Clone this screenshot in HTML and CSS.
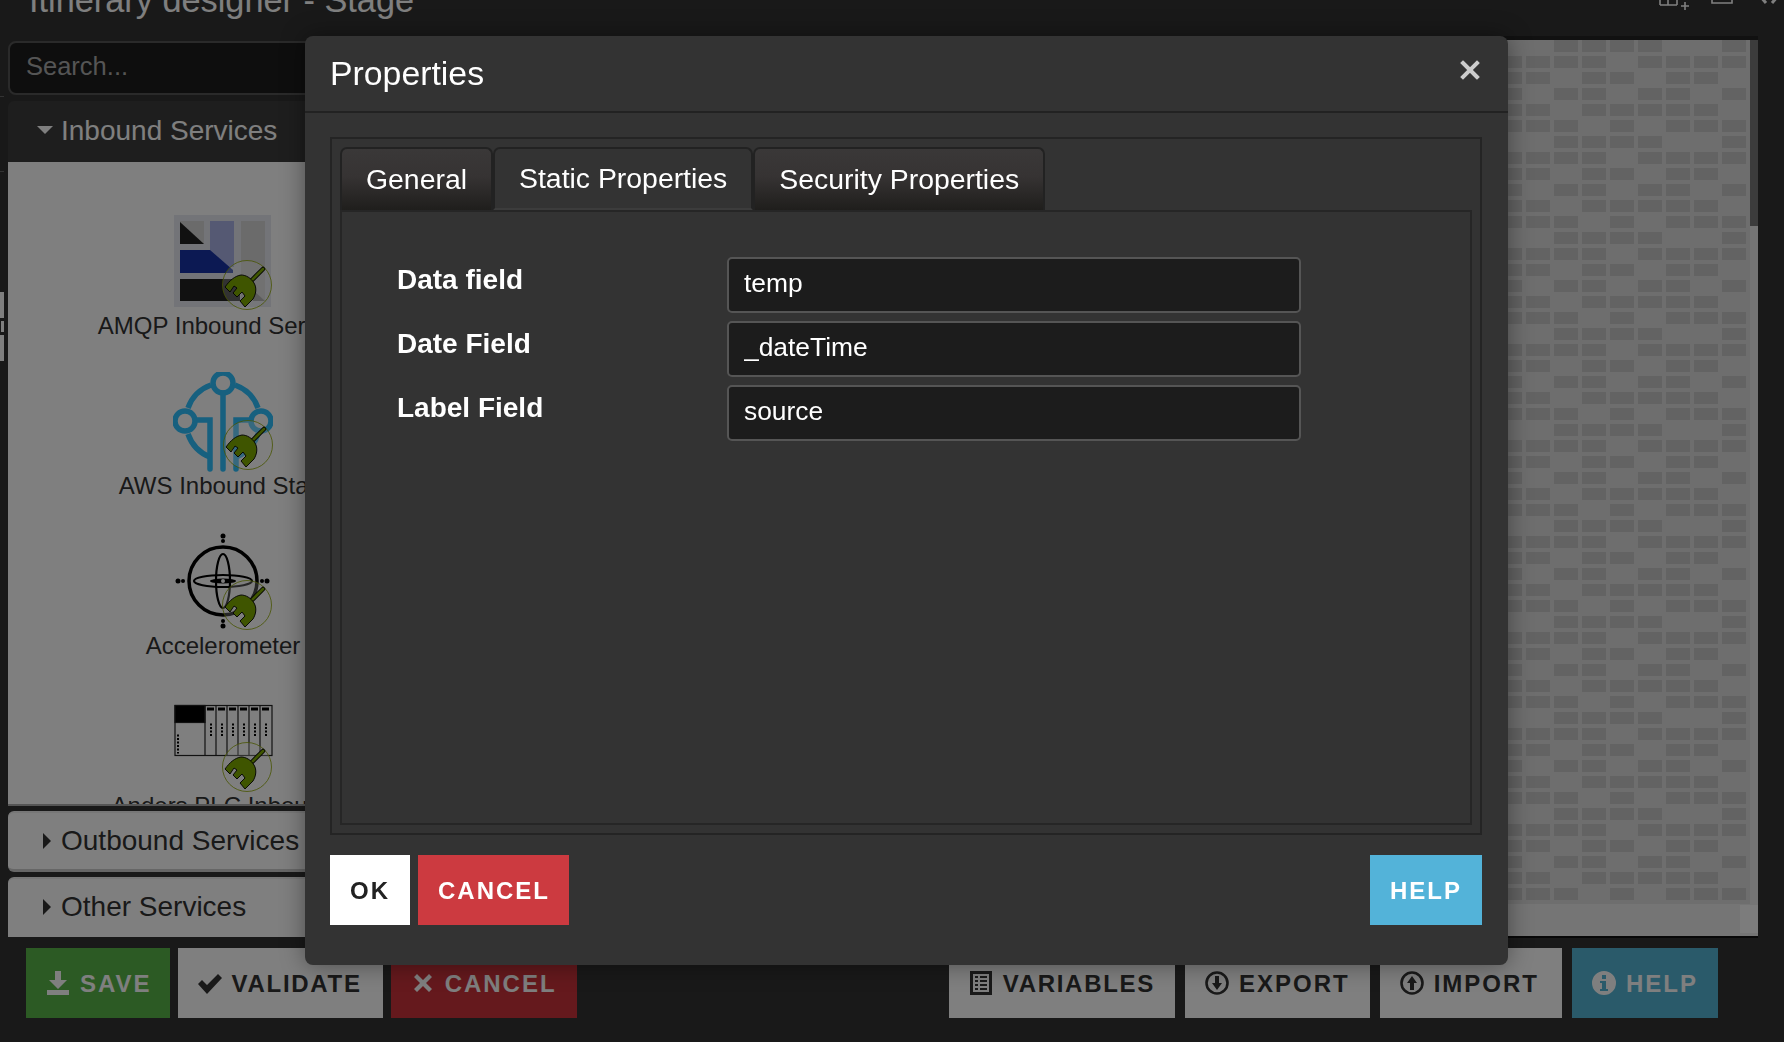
FILE: index.html
```html
<!DOCTYPE html>
<html lang="en">
<head>
    <meta charset="UTF-8">
    <title>Itinerary designer - Stage</title>
    <link rel="stylesheet" href="styles.css">
</head>
<body>

    <svg class="defs" width="0" height="0">
        <defs>
            <symbol id="plug" viewBox="0 0 50 50">
                <circle cx="25" cy="25" r="24.5" fill="rgba(255,255,255,0.3)" stroke="#8fa800" stroke-width="0.8"/>
                <path d="M41 9L29 21" stroke="#000" stroke-width="4.5" stroke-linecap="round"/>
                <path d="M41 9L29 21" stroke="#7eaa00" stroke-width="2.8" stroke-linecap="round"/>
                <path d="M3 27C8 20 13 16 19 15C24 15 29 18 32 23C35 28 34 34 31 39L23 47L18 41L23 36L20 32L15 37L11 33L15 28L12 26L8 32Z" fill="#7eaa00" stroke="#000" stroke-width="0.9" stroke-linejoin="round"/>
            </symbol>
            <pattern id="cells" patternUnits="userSpaceOnUse" x="52" y="0" width="252" height="96">
                <path fill="#c6c6c6" d="M56 0h24v12h-24zM84 0h24v12h-24zM112 0h24v12h-24zM140 0h24v12h-24zM224 0h24v12h-24z
                    M0 16h24v12h-24zM28 16h24v12h-24zM56 16h24v12h-24zM84 16h24v12h-24zM140 16h24v12h-24zM168 16h24v12h-24zM196 16h24v12h-24zM224 16h24v12h-24z
                    M0 32h24v12h-24zM28 32h24v12h-24zM84 32h24v12h-24zM112 32h24v12h-24zM168 32h24v12h-24zM196 32h24v12h-24z
                    M0 48h24v12h-24zM56 48h24v12h-24zM84 48h24v12h-24zM140 48h24v12h-24zM168 48h24v12h-24zM224 48h24v12h-24z
                    M0 64h24v12h-24zM28 64h24v12h-24zM84 64h24v12h-24zM112 64h24v12h-24zM140 64h24v12h-24zM168 64h24v12h-24zM196 64h24v12h-24z
                    M0 80h24v12h-24zM28 80h24v12h-24zM56 80h24v12h-24zM112 80h24v12h-24zM168 80h24v12h-24zM196 80h24v12h-24zM224 80h24v12h-24z"/>
            </pattern>
        </defs>
    </svg>

    <header class="topbar">
        <h1 class="page-title">Itinerary designer - Stage</h1>
        <svg class="window-icons" width="134" height="12" viewBox="0 0 134 12" fill="none" stroke="#fff" stroke-width="1.6">
            <path d="M10 -2V5M18 -2V5M27 -2V5M10 5H27M35 2V10M31 6H39"/>
            <path d="M62 -2V3H82V-2"/>
            <path d="M110 -4L116 3M128 -4L122 3" stroke-width="3"/>
        </svg>
    </header>

    <main class="workspace">
        <div class="edge">
            <i class="edge-line first"></i>
            <i class="edge-line second"></i>
            <i class="edge-block first"></i>
            <i class="edge-block small"></i>
            <i class="edge-block"></i>
        </div>

        <aside class="sidebar">
            <input class="search" type="text" placeholder="Search...">

            <div class="group-head open"><span class="arrow-down"></span>Inbound Services</div>
            <div class="group-body">
                <div class="item">
                    <svg class="item-icon" viewBox="0 0 100 100">
                        <rect x="1" y="3" width="97" height="92" fill="#e6e9f0"/>
                        <rect x="7" y="9" width="24" height="23" fill="#d6d6d6"/>
                        <path d="M7 10L31 32H7Z" fill="#222"/>
                        <rect x="37" y="9" width="24" height="46" fill="#aab2e6"/>
                        <rect x="68" y="9" width="24" height="80" fill="#d6d6d6"/>
                        <path d="M7 38H37L60 58V61H7Z" fill="#1833a6"/>
                        <rect x="7" y="67" width="60" height="22" fill="#222"/>
                        <path d="M80 89L92 89V78Z" fill="#999" transform="matrix(-1 0 0 1 172 0)"/>
                        <use href="#plug" x="49" y="48" width="50" height="50"/>
                    </svg>
                    <div class="item-label">AMQP Inbound Service</div>
                </div>
                <div class="item">
                    <svg class="item-icon" viewBox="0 0 100 100" fill="none" stroke="#2ec0ff" stroke-width="5.5">
                        <circle cx="50" cy="11" r="10"/>
                        <circle cx="12" cy="49" r="10"/>
                        <circle cx="88" cy="49" r="10"/>
                        <path d="M15 36A38 38 0 0 1 38 13M85 36A38 38 0 0 0 62 13M15 62A38 38 0 0 0 37 85M85 62A38 38 0 0 1 63 85"/>
                        <path d="M50 21V97M24 48H37V97M76 48H63V97" stroke-linecap="round"/>
                        <use href="#plug" x="50" y="48" width="50" height="50"/>
                    </svg>
                    <div class="item-label">AWS Inbound Stats</div>
                </div>
                <div class="item">
                    <svg class="item-icon" viewBox="0 0 100 100" fill="none" stroke="#000">
                        <circle cx="50" cy="49" r="34" stroke-width="3.5"/>
                        <ellipse cx="50" cy="49" rx="29" ry="6" stroke-width="2.2"/>
                        <ellipse cx="50" cy="49" rx="7" ry="27" stroke-width="2.2"/>
                        <ellipse cx="50" cy="49" rx="13" ry="2.5" fill="#000" stroke="none"/>
                        <circle cx="50" cy="49" r="2" fill="#fff" stroke="none"/>
                        <g fill="#000" stroke="none">
                            <circle cx="50" cy="4" r="2.5"/>
                            <circle cx="50" cy="9" r="2"/>
                            <circle cx="50" cy="89" r="2"/>
                            <circle cx="50" cy="94" r="2.5"/>
                            <circle cx="5" cy="49" r="2.5"/>
                            <circle cx="10" cy="49" r="2"/>
                            <circle cx="89" cy="49" r="2"/>
                            <circle cx="94" cy="49" r="2.5"/>
                        </g>
                        <use href="#plug" x="49" y="48" width="50" height="50"/>
                    </svg>
                    <div class="item-label">Accelerometer</div>
                </div>
                <div class="item">
                    <svg class="item-icon" viewBox="0 -1.5 100 100" fill="none" stroke="#222" stroke-width="1.2">
                        <rect x="2" y="12" width="97" height="50"/>
                        <rect x="2" y="12" width="30" height="17" fill="#000"/>
                        <path d="M32 12V62M43 12V62M54 12V62M65 12V62M76 12V62M87 12V62"/>
                        <path fill="#000" stroke="none" d="M34 14h7v3h-7zM45 14h7v3h-7zM56 14h7v3h-7zM67 14h7v3h-7zM78 14h7v3h-7zM89 14h7v3h-7z"/>
                        <path stroke="#000" stroke-width="2" stroke-dasharray="2 1.5" d="M38 30V44M49 30V44M60 30V44M71 30V44M82 30V44M93 30V44M5 41V60"/>
                        <use href="#plug" x="49" y="48.5" width="50" height="50"/>
                    </svg>
                    <div class="item-label">Anders PLC Inbound</div>
                </div>
            </div>

            <div class="group-head closed"><span class="arrow-right"></span>Outbound Services</div>
            <div class="group-head closed last"><span class="arrow-right"></span>Other Services</div>
        </aside>

        <section class="canvas">
            <div class="canvas-main">
                <svg class="canvas-grid" width="100%" height="100%">
                    <rect width="100%" height="100%" fill="url(#cells)"/>
                </svg>
                <div class="vscroll"><div class="vscroll-thumb"></div></div>
            </div>
            <div class="hscroll"><div class="hscroll-thumb"></div></div>
        </section>
    </main>

    <footer class="toolbar">
        <div class="toolbar-group">
            <button class="btn btn-green btn-save">
                <svg class="btn-icon" viewBox="0 0 24 24" fill="currentColor"><path d="M9 0h6v9h6l-9 9-9-9h6zM1 19h22v5H1z"/></svg>SAVE
            </button>
            <button class="btn btn-gray btn-tight btn-validate">
                <svg class="btn-icon" viewBox="0 0 24 24" fill="currentColor"><path d="M0 13l4-4 5 5L20 3l4 4L9 23z"/></svg>VALIDATE
            </button>
            <button class="btn btn-red">
                <svg class="btn-icon" viewBox="0 0 24 24" fill="currentColor"><path d="M6 3l6 6 6-6 3 3-6 6 6 6-3 3-6-6-6 6-3-3 6-6-6-6z"/></svg>CANCEL
            </button>
        </div>
        <div class="toolbar-group">
            <button class="btn btn-gray btn-tight">
                <svg class="btn-icon" viewBox="0 0 24 24" fill="currentColor" fill-rule="evenodd"><path d="M1 0h22v24H1zM4 3v18h16V3zM6 5h3v2H6zM11 5h7v2h-7zM6 9h3v2H6zM11 9h7v2h-7zM6 13h3v2H6zM11 13h7v2h-7zM6 17h3v2H6zM11 17h7v2h-7z"/></svg>VARIABLES
            </button>
            <button class="btn btn-gray btn-export">
                <svg class="btn-icon" viewBox="0 0 24 24"><circle cx="12" cy="12" r="10.5" fill="none" stroke="currentColor" stroke-width="2.6"/><path fill="currentColor" d="M10 5h4v7h3l-5 7-5-7h3z"/></svg>EXPORT
            </button>
            <button class="btn btn-gray btn-import">
                <svg class="btn-icon" viewBox="0 0 24 24"><circle cx="12" cy="12" r="10.5" fill="none" stroke="currentColor" stroke-width="2.6"/><path fill="currentColor" d="M10 19h4v-7h3l-5-7-5 7h3z"/></svg>IMPORT
            </button>
            <button class="btn btn-blue">
                <svg class="btn-icon" viewBox="0 0 24 24" fill="currentColor" fill-rule="evenodd"><path d="M12 0a12 12 0 1 0 0 24 12 12 0 0 0 0-24zM10 4h4v4h-4zM8 10h6v8h2v2H8v-2h2v-6H8z"/></svg>HELP
            </button>
        </div>
    </footer>

    <div class="backdrop"></div>

    <div class="modal">
        <div class="modal-header">
            <h2 class="modal-title">Properties</h2>
            <svg class="modal-close" width="20" height="20" viewBox="0 0 20 20"><path d="M3 3L17 17M17 3L3 17" stroke="#ccc" stroke-width="4" stroke-linecap="square"/></svg>
        </div>

        <div class="modal-body">
            <div class="tabs-frame">
                <div class="tabs">
                    <div class="tab">General</div>
                    <div class="tab active">Static Properties</div>
                    <div class="tab">Security Properties</div>
                </div>
                <form class="tab-pane">
                    <label for="dataField">Data field</label>
                    <input type="text" id="dataField" value="temp">

                    <label for="dateField">Date Field</label>
                    <input type="text" id="dateField" value="_dateTime">

                    <label for="labelField">Label Field</label>
                    <input type="text" id="labelField" value="source">
                </form>
            </div>
        </div>

        <div class="modal-footer">
            <button class="btn btn-white">OK</button>
            <button class="btn btn-danger">CANCEL</button>
            <button class="btn btn-info">HELP</button>
        </div>
    </div>

</body>
</html>
```

FILE: styles.css
```css
* {
    box-sizing: border-box;
}

html, body {
    height: 100%;
}

body {
    margin: 0;
    background-color: #333;
    font-family: "Liberation Sans", Arial, sans-serif;
    color: #fff;
    overflow: hidden;
}

.defs {
    position: absolute;
}

/* top bar, the page is scrolled so the title is cut off */
.topbar {
    height: 36px;
    display: flex;
    justify-content: space-between;
    align-items: flex-start;
    overflow: hidden;
}

.page-title {
    margin: -20px 0 0 29px;
    font-size: 34.3px;
    line-height: 40px;
    font-weight: normal;
    white-space: nowrap;
}

.window-icons {
    flex: none;
}

.workspace {
    height: 902px;
    display: flex;
    margin-right: 26px;
}

/* bits of the window behind, on the left side */
.edge {
    width: 8px;
    flex: none;
}

.edge i {
    display: block;
    width: 4px;
}

.edge-line {
    height: 1px;
    background-color: #666;
}

.edge-line.first {
    margin-top: 60px;
}

.edge-line.second {
    margin-top: 74px;
}

.edge-block {
    height: 26px;
    margin-top: 3px;
    background-color: #fff;
}

.edge-block.first {
    margin-top: 120px;
}

.edge-block.small {
    height: 11px;
    margin-left: 1px;
    width: 3px !important;
}

.sidebar {
    width: 430px;
    flex: none;
    display: flex;
    flex-direction: column;
    padding-top: 5px;
}

.search {
    height: 54px;
    flex: none;
    margin-bottom: 6px;
    padding: 0 16px 4px;
    background-color: #1c1c1c;
    border: 2px solid #555;
    border-radius: 8px;
    font-family: inherit;
    font-size: 25.5px;
    color: #fff;
}

.search::placeholder {
    color: #aaa;
}

.group-head {
    height: 61px;
    flex: none;
    display: flex;
    align-items: center;
    padding-left: 29px;
    font-size: 28px;
    border-radius: 6px 6px 0 0;
}

.group-head.open {
    padding-bottom: 2px;
    background-color: #3c3c3c;
    color: #fff;
}

.group-head.closed {
    margin-top: 5px;
    background-color: #fff;
    color: #333;
    border-top: 2px solid #eee;
    border-bottom: 3px solid #ccc;
    border-radius: 6px;
}

.group-head.last {
    height: 60px;
    padding-bottom: 2px;
    border-bottom: 0;
    border-radius: 6px 6px 0 0;
}

.arrow-down {
    width: 0;
    height: 0;
    margin-right: 8px;
    margin-bottom: 2px;
    border-left: 8px solid transparent;
    border-right: 8px solid transparent;
    border-top: 8px solid #fff;
}

.arrow-right {
    width: 0;
    height: 0;
    margin-left: 6px;
    margin-right: 10px;
    border-top: 8px solid transparent;
    border-bottom: 8px solid transparent;
    border-left: 8px solid #333;
}

.group-body {
    height: 644px;
    flex: none;
    padding-top: 50px;
    background-color: #fff;
    border-bottom: 2px solid #aaa;
    overflow: hidden;
}

.item {
    display: flex;
    flex-direction: column;
    align-items: center;
    padding-bottom: 32px;
}

.item-icon {
    width: 100px;
    height: 100px;
    flex: none;
}

.item-label {
    height: 28px;
    line-height: 28px;
    font-size: 24px;
    color: #333;
    white-space: nowrap;
}

.canvas {
    flex: 1;
    display: flex;
    flex-direction: column;
    border-top: 4px solid #222;
    border-bottom: 2px solid #111;
}

.canvas-main {
    flex: 1;
    display: flex;
    min-height: 0;
    background-color: #dcdcdc;
}

.canvas-grid {
    flex: 1;
    min-width: 0;
}

.vscroll {
    width: 8px;
    flex: none;
    background-color: #eaeaea;
}

.vscroll-thumb {
    height: 186px;
    background-color: #787878;
}

.hscroll {
    height: 32px;
    flex: none;
    display: flex;
    justify-content: flex-end;
    background-color: #eaeaea;
}

.hscroll-thumb {
    width: 18px;
    height: 28px;
    margin-top: 1px;
    background-color: #f8f8f8;
}

.toolbar {
    display: flex;
    justify-content: space-between;
    padding: 10px 66px 0 26px;
}

.toolbar-group {
    display: flex;
    gap: 8px;
}

.toolbar-group:last-child {
    gap: 10px;
}

.btn {
    height: 70px;
    display: inline-flex;
    align-items: center;
    padding: 2px 20px 0;
    border: none;
    font-family: inherit;
    font-size: 24px;
    font-weight: bold;
    letter-spacing: 2px;
    color: #fff;
}

.btn-icon {
    width: 24px;
    height: 24px;
    margin-right: 10px;
    margin-bottom: 2px;
    flex: none;
}

.btn-green {
    background-color: #58b448;
}

.btn-gray {
    background-color: #fff;
    color: #333;
}

.btn-red {
    background-color: #ca323a;
}

.btn-blue {
    background-color: #54b4d4;
}

.btn-save {
    padding-right: 18px;
}

.btn-tight {
    letter-spacing: 1.7px;
}

.btn-validate {
    padding-right: 21px;
}

.btn-import {
    padding-right: 23px;
}

.backdrop {
    position: fixed;
    top: 0;
    right: 0;
    bottom: 0;
    left: 0;
    background-color: rgba(0, 0, 0, 0.5);
}

.modal {
    position: absolute;
    top: 36px;
    left: 305px;
    width: 1203px;
    height: 929px;
    display: flex;
    flex-direction: column;
    background-color: #333;
    border-radius: 8px;
    box-shadow: 0 0 24px rgba(0, 0, 0, 0.4);
}

.modal-header {
    height: 77px;
    flex: none;
    display: flex;
    justify-content: space-between;
    align-items: center;
    padding: 0 28px 0 25px;
    border-bottom: 2px solid #222;
}

.modal-title {
    margin: 0;
    font-size: 33.8px;
    font-weight: normal;
}

.modal-close {
    margin-bottom: 8px;
}

.modal-body {
    flex: 1;
    min-height: 0;
    padding: 24px 26px 0 25px;
}

.tabs-frame {
    height: 698px;
    display: flex;
    flex-direction: column;
    padding: 8px;
    border: 2px solid #242424;
}

.tabs {
    height: 63px;
    flex: none;
    display: flex;
}

.tab {
    display: flex;
    align-items: center;
    padding: 0 24px;
    font-size: 28.4px;
    border: 2px solid #222;
    border-bottom: 0;
    border-radius: 7px 7px 0 0;
    background: linear-gradient(#3a3838 0%, #363333 45%, #1f1e1c 100%);
}

.tab.active {
    background: #333;
    border-bottom: 2px solid #3c3c3c;
}

.tab-pane {
    flex: 1;
    display: grid;
    grid-template-columns: 330px 574px;
    grid-auto-rows: 56px;
    row-gap: 8px;
    align-content: start;
    padding: 45px 0 0 55px;
    border: 2px solid #262626;
}

.tab-pane label {
    padding-top: 7px;
    font-size: 28px;
    font-weight: bold;
}

.tab-pane input {
    padding: 0 15px 4px;
    background-color: #1c1c1c;
    border: 2px solid #555;
    border-radius: 5px;
    font-family: inherit;
    font-size: 26.4px;
    color: #fff;
}

.modal-footer {
    flex: none;
    display: flex;
    gap: 8px;
    padding: 20px 26px 40px 25px;
}

.btn-white {
    background-color: #fff;
    color: #222;
}

.btn-danger {
    padding-right: 19px;
    background-color: #cc3a40;
}

.btn-info {
    margin-left: auto;
    background-color: #53b3d9;
}
```
